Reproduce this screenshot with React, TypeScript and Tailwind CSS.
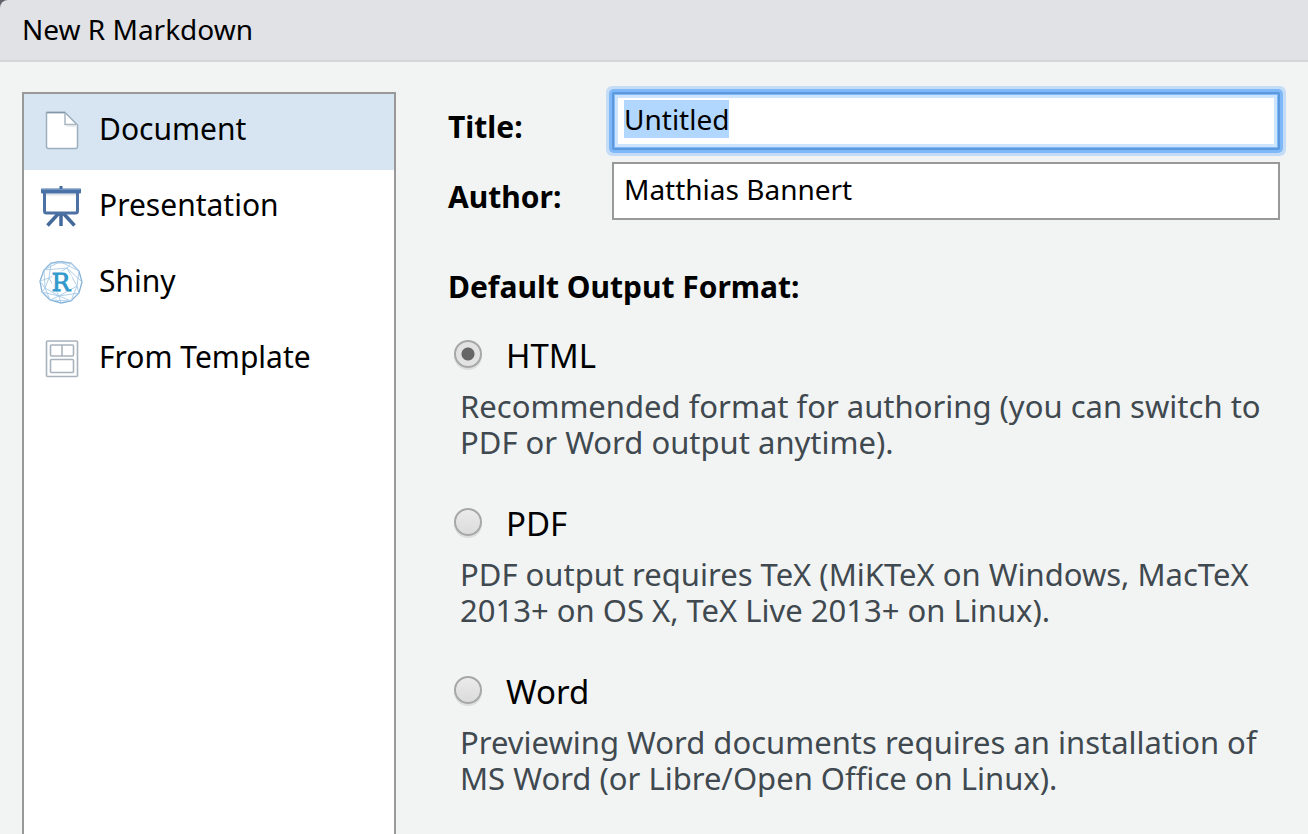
import { useEffect, useRef, useState } from "react";
import type { ReactNode } from "react";

function DocumentIcon() {
  return (
    <svg width="44" height="44" viewBox="0 1 44 44" fill="none" aria-hidden="true">
      <path d="M7.500 4.500H26L38.500 17V38.500Q38.500 40.500 36.500 40.500H9.500Q7.500 40.500 7.500 38.500Z" fill="#fff" stroke="#9dafbe" strokeWidth="1.500" />
      <path d="M8 4.500H26" stroke="#8395a6" strokeWidth="1.500" />
      <path d="M26 5V16.500H37" stroke="#a9b6c2" strokeWidth="1.500" />
      <path d="M28 18H37" stroke="#dfe4e8" strokeWidth="1.500" />
    </svg>
  );
}

function PresentationIcon() {
  return (
    <svg width="44" height="44" viewBox="-1 0 44 44" fill="none" aria-hidden="true">
      <path d="M21 28V41M19 28L7.500 40.500M23 28L34.500 40.500" stroke="#44699b" strokeWidth="3.500" />
      <path d="M4.500 6V26Q4.500 28 6.500 28H35.500Q37.500 28 37.500 26V6" fill="#fff" stroke="#4c71a2" strokeWidth="3" />
      <path d="M6 9.500H36" stroke="#dfe3e8" strokeWidth="2" />
      <rect x="19.500" y="1" width="3" height="4" fill="#44699b" />
      <rect x="1" y="3.500" width="40" height="5" rx="1" fill="#4a72a6" />
      <path d="M2 4.500H40" stroke="#7095c3" />
    </svg>
  );
}

function ShinyIcon() {
  return (
    <svg width="44" height="44" viewBox="0 1 44 44" fill="none" aria-hidden="true">
      <path d="M21 1.500L32 3L40 11L43 22L40 33L32 41L22 43L11 40L3 32L1 21L5 10L12 3Z" stroke="#85b2d8" strokeWidth="1.300" />
      <path
        d="M12 3L32 3L40 11L38 26L32 41L11 40L6 28L5 10L21 1.500L40 11M5 10L28 8L43 22M12 3L10 18L1 21L6 28L3 32L20 36L32 41M10 18L28 8L32 3M28 8L38 26L40 33L20 36L22 43M10 18L6 28L20 36L11 40M38 26L20 36L10 18"
        stroke="#a6cae6"
        strokeWidth="0.900"
      />
      <path d="M13 11H28L33 16V24L31 32H13Z" fill="#fff" fillOpacity="0.750" />
      <text x="22" y="31" textAnchor="middle" fontFamily="DejaVu Serif, serif" fontSize="25" fill="#3299cd" stroke="#3299cd" strokeWidth="0.800">
        R
      </text>
    </svg>
  );
}

function TemplateIcon() {
  return (
    <svg width="44" height="44" viewBox="0 1 44 44" fill="none" stroke="#a9b3bd" strokeWidth="1.600" aria-hidden="true">
      <rect x="7.500" y="5" width="31" height="35.500" rx="1" />
      <rect x="11.500" y="9" width="23" height="11" rx="1" />
      <path d="M23 9V20" />
      <rect x="11.500" y="23.500" width="23" height="13" rx="1" />
    </svg>
  );
}

const templates: { name: string; icon: ReactNode }[] = [
  { name: "Document", icon: <DocumentIcon /> },
  { name: "Presentation", icon: <PresentationIcon /> },
  { name: "Shiny", icon: <ShinyIcon /> },
  { name: "From Template", icon: <TemplateIcon /> },
];

const formats = [
  {
    id: "html",
    name: "HTML",
    text: "Recommended format for authoring (you can switch to PDF or Word output anytime).",
  },
  {
    id: "pdf",
    name: "PDF",
    text: "PDF output requires TeX (MiKTeX on Windows, MacTeX 2013+ on OS X, TeX Live 2013+ on Linux).",
  },
  {
    id: "word",
    name: "Word",
    text: "Previewing Word documents requires an installation of MS Word (or Libre/Open Office on Linux).",
  },
];

export default function App() {
  const titleRef = useRef<HTMLInputElement>(null);
  const [template, setTemplate] = useState("Document");
  const [format, setFormat] = useState("html");

  useEffect(() => {
    titleRef.current?.focus();
    titleRef.current?.select();
  }, []);

  return (
    <div className="flex h-screen flex-col overflow-hidden bg-[#f2f4f4] font-['Noto_Sans','Open_Sans',sans-serif] text-black">
      <div className="shrink-0 bg-[#5f6269]">
        <header className="rounded-tl-[8px] border-b-2 border-[#d5d6da] bg-[#e1e2e6] px-[22px] pt-[11px] pb-[13px]">
          <h1 className="text-[28px] leading-9">New R Markdown</h1>
        </header>
      </div>
      <main className="flex min-h-0 flex-1 gap-[52px] pt-[30px] pr-7 pl-[22px]">
        <nav className="w-[374px] shrink-0 border-2 border-b-0 border-[#999] bg-white" aria-label="Template type">
          {templates.map((t) => (
            <button
              key={t.name}
              type="button"
              aria-pressed={template === t.name}
              onClick={() => setTemplate(t.name)}
              className={`flex h-[76px] w-full items-center gap-4 pr-4 pb-1.5 pl-[15px] text-left text-[30px] leading-9 ${template === t.name ? "bg-[#d6e5f1]" : ""}`}
            >
              <span className="shrink-0 pt-1">{t.icon}</span>
              {t.name}
            </button>
          ))}
        </nav>
        <form className="min-w-0 flex-1" onSubmit={(e) => e.preventDefault()}>
          <div className="grid grid-cols-[164px_minmax(0,1fr)] gap-y-3">
            <label htmlFor="title" className="pt-[17px] text-[30px] leading-9 font-bold">
              Title:
            </label>
            <input
              ref={titleRef}
              id="title"
              defaultValue="Untitled"
              className="h-[58px] w-full border-2 border-[#999] bg-white px-2.5 pb-1 text-[28px] outline-none selection:bg-[#b2d7fe] selection:text-black focus:rounded-[2px] focus:border-[#5b98dc] focus:shadow-[0_0_0_3px_#7fb8f8,0_0_0_6px_#c4dcf6,inset_0_0_0_1px_#7fb8f8,inset_0_0_0_4px_#cce4fe]"
            />
            <label htmlFor="author" className="pt-[17px] text-[30px] leading-9 font-bold">
              Author:
            </label>
            <input
              id="author"
              defaultValue="Matthias Bannert"
              className="h-[58px] w-full border-2 border-[#999] bg-white px-2.5 pb-1 text-[28px] outline-none"
            />
          </div>
          <fieldset className="pt-[49px]">
            <legend className="contents text-[30px] leading-9 font-bold">Default Output Format:</legend>
            <div className="flex flex-col gap-[46px] pt-[33px]">
              {formats.map((f) => (
                <div key={f.id}>
                  <div className="flex items-center gap-6 pl-1.5">
                    <input
                      type="radio"
                      id={f.id}
                      name="format"
                      checked={format === f.id}
                      onChange={() => setFormat(f.id)}
                      aria-describedby={`${f.id}-text`}
                      className="mb-1 size-7 appearance-none rounded-full border-2 border-[#a7a7a7] bg-linear-to-b from-[#ececec] to-[#dadada] bg-origin-border shadow-[0_2px_0_#dcdddd] checked:bg-[radial-gradient(circle,#666_6px,#e2e2e2_7px)]"
                    />
                    <label htmlFor={f.id} className="text-[33px] leading-9">
                      {f.name}
                    </label>
                  </div>
                  <p id={`${f.id}-text`} className="pt-3.5 pl-3 text-[31px] leading-9 text-[#40494f]">
                    {f.text}
                  </p>
                </div>
              ))}
            </div>
          </fieldset>
        </form>
      </main>
    </div>
  );
}
